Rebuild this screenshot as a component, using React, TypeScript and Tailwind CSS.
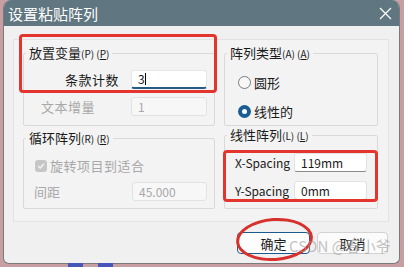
import React from "react";

const font = { fontFamily: '"Noto Sans CJK SC", "Noto Sans", sans-serif' };

function Legend({ text, k }: { text: string; k: string }) {
  return (
    <legend className="ml-[2px] px-[3px] text-[13px] leading-[14px] text-[#1a1a1a]">
      {text}
      <span className="text-[10px]">
        ({k}) (<span className="underline">{k}</span>)
      </span>
    </legend>
  );
}

function Input({ value, disabled, focused, w = "w-[76px]" }: { value: string; disabled?: boolean; focused?: boolean; w?: string }) {
  return (
    <div
      className={`${w} h-[19px] flex items-center px-[6px] text-[12px] border rounded-[3px] ${
        disabled
          ? "bg-[#f7f7f7] border-[#e2e2e2] text-[#a8a8a8]"
          : focused
          ? "bg-white border-[#e6e6e6] border-b-2 border-b-[#255c86] text-[#1a1a1a]"
          : "bg-white border-[#e3e3e3] border-b-[#8a8a8a] text-[#1a1a1a]"
      }`}
    >
      {value}
      {focused && <span className="w-px h-[12px] bg-black" />}
    </div>
  );
}

export default function App() {
  return (
    <div className="relative w-[404px] h-[267px] bg-[#c79ea2] overflow-hidden" style={font}>
      <div className="absolute left-[68px] top-[263px] w-[15px] h-[4px] bg-[#4656b8]" />
      <div className="absolute left-[98px] top-[263px] w-[15px] h-[4px] bg-[#4656b8]" />
      <div className="ml-[3px] w-[397px] h-[264px] rounded-t-[8px] rounded-b-[6px] border border-[#7a7a7a] border-t-0 bg-[#f0f0f0] flex flex-col overflow-hidden">
        <div className="h-[26px] bg-[#607680] flex items-center justify-between pl-[4px] pr-[7px] shrink-0">
          <span className="text-white text-[15px] leading-none">设置粘贴阵列</span>
          <svg width="13" height="13" viewBox="0 0 13 13">
            <path d="M1 1 L12 12 M12 1 L1 12" stroke="#ffffff" strokeWidth="1.2" />
          </svg>
        </div>
        <div className="mt-[13px] ml-[9px] w-[376px] h-[183px] border border-[#e3e3e3] bg-[#f3f3f3] flex gap-[9px] pl-[9px] pt-[6px]">
          <div className="w-[192px] flex flex-col gap-[5px]">
            <fieldset className="h-[80px] border border-[#d9d9d9] rounded-[2px]">
              <Legend text="放置变量" k="P" />
              <div className="flex items-center h-[19px] mt-[9px]">
                <span className="w-[95px] text-right text-[13px] text-[#1a1a1a] tracking-[0.5px]">条款计数</span>
                <div className="ml-[12px]">
                  <Input value="3" focused />
                </div>
              </div>
              <div className="flex items-center h-[19px] mt-[8px]">
                <span className="pl-[17px] w-[107px] text-[13px] text-[#a8a8a8] tracking-[0.5px]">文本增量</span>
                <Input value="1" disabled />
              </div>
            </fieldset>
            <fieldset className="h-[78px] border border-[#d9d9d9] rounded-[2px]">
              <Legend text="循环阵列" k="R" />
              <div className="flex items-center mt-[11px] ml-[11px] h-[17px]">
                <div className="w-[12px] h-[12px] rounded-[3px] bg-[#c6c6c6] flex items-center justify-center">
                  <svg width="8" height="8" viewBox="0 0 8 8">
                    <path d="M1 4 L3.2 6 L7 1.8" stroke="#f5f5f5" strokeWidth="1.4" fill="none" />
                  </svg>
                </div>
                <span className="ml-[3px] text-[13px] text-[#a8a8a8] tracking-[0.5px]">旋转项目到适合</span>
              </div>
              <div className="flex items-center mt-[8px] h-[19px]">
                <span className="pl-[10px] w-[108px] text-[13px] text-[#a8a8a8]">间距</span>
                <Input value="45.000" disabled w="w-[75px]" />
              </div>
            </fieldset>
          </div>
          <div className="w-[154px] flex flex-col gap-[2px]">
            <fieldset className="h-[80px] border border-[#d9d9d9] rounded-[2px]">
              <Legend text="阵列类型" k="A" />
              <div className="flex items-center mt-[12px] ml-[13px]">
                <div className="w-[13px] h-[13px] rounded-full border border-[#7a7a7a] bg-[#f7f7f7]" />
                <span className="ml-[3px] text-[13px] text-[#1a1a1a]">圆形</span>
              </div>
              <div className="flex items-center mt-[9px] ml-[13px]">
                <div className="w-[13px] h-[13px] rounded-full bg-[#1a5d95] flex items-center justify-center">
                  <div className="w-[5px] h-[5px] rounded-full bg-white" />
                </div>
                <span className="ml-[3px] text-[13px] text-[#1a1a1a]">线性的</span>
              </div>
            </fieldset>
            <fieldset className="h-[81px] border border-[#d9d9d9] rounded-[2px]">
              <Legend text="线性阵列" k="L" />
              <div className="flex items-center mt-[10px] h-[19px]">
                <span className="pl-[10px] w-[69px] text-[12px] text-[#1a1a1a]">X-Spacing</span>
                <Input value="119mm" w="w-[73px]" />
              </div>
              <div className="flex items-center mt-[9px] h-[19px]">
                <span className="pl-[10px] w-[69px] text-[12px] text-[#1a1a1a]">Y-Spacing</span>
                <Input value="0mm" w="w-[73px]" />
              </div>
            </fieldset>
          </div>
        </div>
        <div className="flex justify-end gap-[7px] mt-[10px] pr-[11px]">
          <button className="w-[73px] h-[22px] rounded-[4px] border border-[#1b5a8c] bg-[#fdfdfd] text-[13px] text-[#1a1a1a] leading-none">确定</button>
          <button className="w-[71px] h-[22px] rounded-[4px] border border-[#d3d3d3] bg-[#fbfbfb] text-[13px] text-[#1a1a1a] leading-none">取消</button>
        </div>
      </div>
      {/* annotations */}
      <div className="absolute left-[19px] top-[34px] w-[198px] h-[59px] border-[3px] border-[#e4342e] rounded-[4px]" />
      <div className="absolute left-[223px] top-[150px] w-[155px] h-[52px] border-[3px] border-[#e4342e] rounded-[4px]" />
      <div className="absolute left-[236px] top-[218px] w-[77px] h-[43px] border-[3px] border-[#d8302c] rounded-[50%] rotate-[-4deg]" />
      <div className="absolute left-[289px] top-[238px] text-[15px] text-[#9a9a9a]/60 leading-none whitespace-nowrap">CSDN @春小爷</div>
    </div>
  );
}
